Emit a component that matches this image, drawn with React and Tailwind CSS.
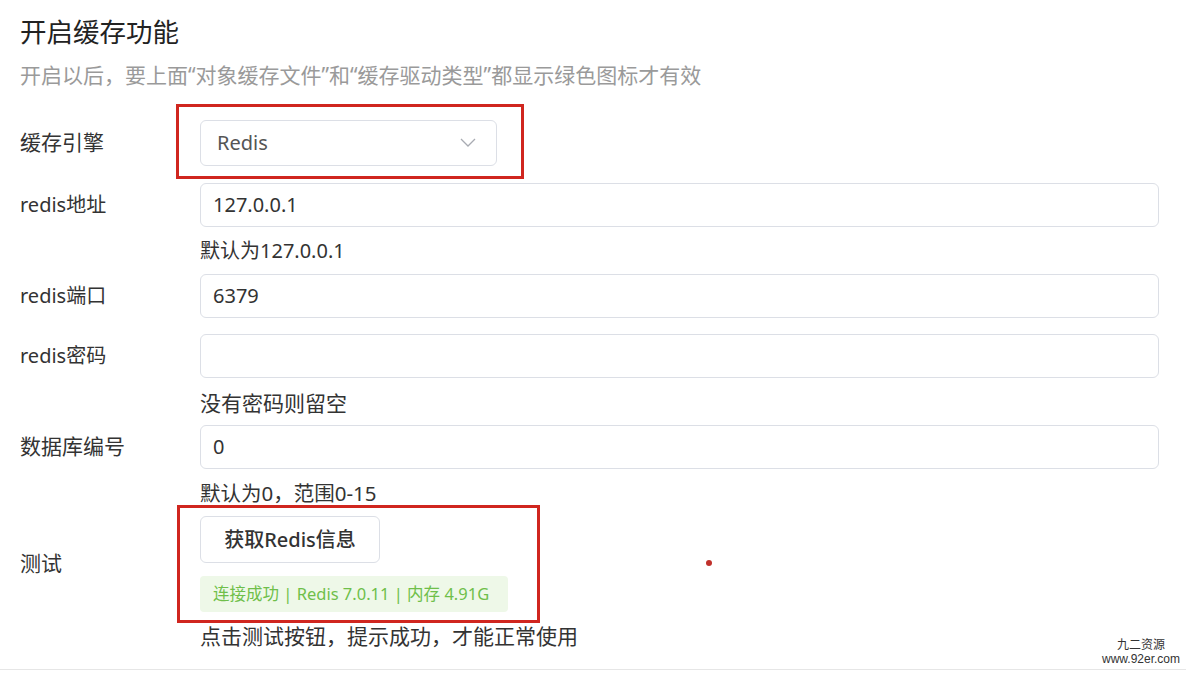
import React from 'react';

const FONT = { fontFamily: '"Noto Sans", "Noto Sans CJK SC", sans-serif' };

const Row = ({ label, size = 'text-[21px]', children }) => (
  <div className="flex items-center">
    <div className={`w-[180px] shrink-0 text-[#333] ${size}`}>{label}</div>
    <div className="flex-1">{children}</div>
  </div>
);

const Help = ({ children, className = '' }) => (
  <div className={`pl-[180px] leading-[28px] text-[#333] ${className}`}>{children}</div>
);

const Input = ({ value }) => (
  <div className="h-[44px] w-[959px] rounded-[6px] border border-[#dcdfe6] bg-white px-[12px] flex items-center text-[20px] text-[#333]">
    {value}
  </div>
);

export default function App() {
  return (
    <div className="relative h-[673px] w-[1186px] overflow-hidden bg-white" style={FONT}>
      <div className="pl-[20px] pt-[14px]">
        <div className="text-[26.5px] leading-[36px] text-[#222]">开启缓存功能</div>
        <div className="mt-[11px] text-[21px] leading-[28px] text-[#9a9a9a]">
          开启以后，要上面“对象缓存文件”和“缓存驱动类型”都显示绿色图标才有效
        </div>

        <div className="mt-[31px]">
          <Row label="缓存引擎">
            <div className="flex h-[46px] w-[297px] items-center justify-between rounded-[6px] border border-[#dcdfe6] pl-[16px] pr-[20px] text-[20px] text-[#555]">
              <span>Redis</span>
              <svg width="16" height="10" viewBox="0 0 16 10" fill="none">
                <path d="M1 1l7 7 7-7" stroke="#a8abb2" strokeWidth="1.3" />
              </svg>
            </div>
          </Row>
        </div>

        <div className="mt-[17px]">
          <Row label="redis地址" size="text-[20px]">
            <Input value="127.0.0.1" />
          </Row>
        </div>
        <Help className="mt-[10px] text-[20px]">默认为127.0.0.1</Help>

        <div className="mt-[9px]">
          <Row label="redis端口" size="text-[20px]">
            <Input value="6379" />
          </Row>
        </div>

        <div className="mt-[16px]">
          <Row label="redis密码" size="text-[20px]">
            <Input value="" />
          </Row>
        </div>
        <Help className="mt-[11px] text-[21px]">没有密码则留空</Help>

        <div className="mt-[8px]">
          <Row label="数据库编号">
            <Input value="0" />
          </Row>
        </div>
        <Help className="mt-[10px] text-[20.5px]">默认为0，范围0-15</Help>

        <div className="mt-[9px]">
          <Row label="测试">
            <div className="flex flex-col items-start">
              <div className="flex h-[47px] w-[180px] items-center justify-center rounded-[6px] border border-[#dcdfe6] text-[20px] font-medium text-[#333]">
                获取Redis信息
              </div>
              <div className="mt-[13px] flex h-[36px] w-[308px] items-center whitespace-nowrap rounded-[4px] bg-[#eef8e8] px-[13px] text-[16.5px] text-[#6fbf4a]">
                连接成功 | Redis 7.0.11 | 内存 4.91G
              </div>
            </div>
          </Row>
        </div>
        <Help className="mt-[10px] text-[21px]">点击测试按钮，提示成功，才能正常使用</Help>
      </div>

      {/* bottom divider */}
      <div className="absolute bottom-[3px] left-0 h-px w-full bg-[#e6e6e6]" />

      {/* annotation boxes */}
      <div className="absolute left-[176px] top-[104px] h-[75px] w-[348px] border-[3px] border-[#d0261f]" />
      <div className="absolute left-[177px] top-[505px] h-[118px] w-[363px] border-[3px] border-[#d0261f]" />
      <div className="absolute left-[706px] top-[560px] h-[6px] w-[6px] rounded-full bg-[#c0302b]" />

      {/* watermark */}
      <div className="absolute right-[6px] top-[638px] text-center text-[12px] leading-[14px] text-[#333]" style={{ fontFamily: '"Liberation Sans", "Noto Sans CJK SC", sans-serif' }}>
        <div>九二资源</div>
        <div>www.92er.com</div>
      </div>
    </div>
  );
}
